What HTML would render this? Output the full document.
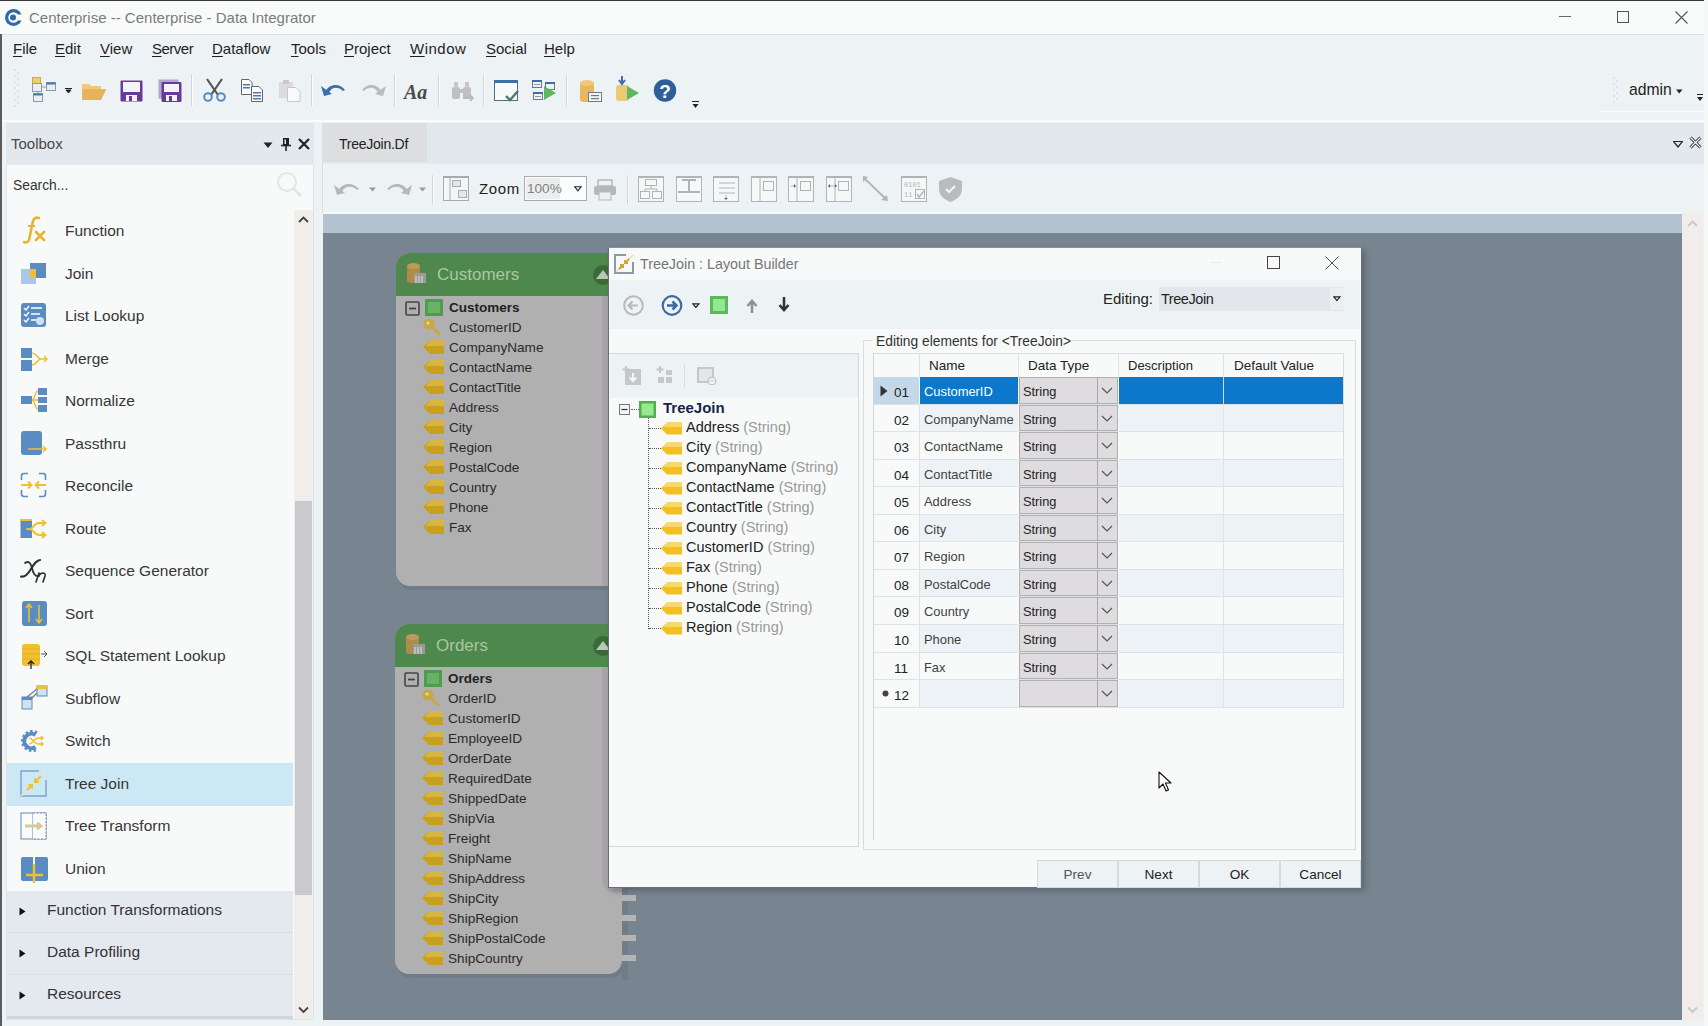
<!DOCTYPE html>
<html><head><meta charset="utf-8"><style>
html,body{margin:0;padding:0;width:1708px;height:1026px;overflow:hidden;background:#edf3f5;}
body{position:relative;font-family:"Liberation Sans", sans-serif;}
.a{position:absolute;}
.t{position:absolute;white-space:nowrap;font-family:"Liberation Sans", sans-serif;}
u{text-decoration:underline;text-underline-offset:2px;text-decoration-thickness:1px;}
</style></head><body>
<div class="a" style="left:0px;top:0px;width:1708px;height:34px;background:#f9fbfb;"></div>
<div class="a" style="left:0px;top:0px;width:1704px;height:1px;background:#3a3a3a;"></div>
<div class="a" style="left:1704px;top:0px;width:4px;height:1026px;background:#f6f8f8;"></div>
<div class="a" style="left:0px;top:34px;width:1704px;height:1px;background:#d9dfe2;"></div>
<div class="a" style="left:0px;top:34px;width:2px;height:992px;background:#5c5c5c;"></div>
<svg class="a" style="left:4px;top:8px;" width="19" height="19" viewBox="0 0 19 19"><circle cx="9.5" cy="9.5" r="8.5" fill="#2f6aa6"/><circle cx="9.5" cy="9.5" r="5.2" fill="#f9fbfb"/><rect x="12" y="6.5" width="8" height="6" fill="#f9fbfb"/><circle cx="9" cy="9.5" r="3" fill="#2f6aa6"/></svg>
<div class="t" style="left:29px;top:10.30px;font-size:15px;line-height:15px;color:#7b7b7b;font-weight:normal;">Centerprise -- Centerprise - Data Integrator</div>
<div class="a" style="left:1559px;top:16px;width:12px;height:1px;background:#666;"></div>
<div class="a" style="left:1617px;top:11px;width:12px;height:12px;border:1px solid #555;box-sizing:border-box;"></div>
<svg class="a" style="left:1675px;top:11px;" width="13" height="13" viewBox="0 0 13 13"><path d="M0.5 0.5 L12.5 12.5 M12.5 0.5 L0.5 12.5" stroke="#555" stroke-width="1.1"/></svg>
<div class="t" style="left:13px;top:41.30px;font-size:15px;line-height:15px;color:#1e1e1e;font-weight:normal;letter-spacing:0px;"><u>F</u>ile</div>
<div class="t" style="left:55px;top:41.30px;font-size:15px;line-height:15px;color:#1e1e1e;font-weight:normal;letter-spacing:0px;"><u>E</u>dit</div>
<div class="t" style="left:100px;top:41.30px;font-size:15px;line-height:15px;color:#1e1e1e;font-weight:normal;letter-spacing:0px;"><u>V</u>iew</div>
<div class="t" style="left:152px;top:41.30px;font-size:15px;line-height:15px;color:#1e1e1e;font-weight:normal;letter-spacing:-0.5px;"><u>S</u>erver</div>
<div class="t" style="left:212px;top:41.30px;font-size:15px;line-height:15px;color:#1e1e1e;font-weight:normal;letter-spacing:0px;"><u>D</u>ataflow</div>
<div class="t" style="left:291px;top:41.30px;font-size:15px;line-height:15px;color:#1e1e1e;font-weight:normal;letter-spacing:0px;"><u>T</u>ools</div>
<div class="t" style="left:344px;top:41.30px;font-size:15px;line-height:15px;color:#1e1e1e;font-weight:normal;letter-spacing:0px;"><u>P</u>roject</div>
<div class="t" style="left:410px;top:41.30px;font-size:15px;line-height:15px;color:#1e1e1e;font-weight:normal;letter-spacing:0.5px;"><u>W</u>indow</div>
<div class="t" style="left:486px;top:41.30px;font-size:15px;line-height:15px;color:#1e1e1e;font-weight:normal;letter-spacing:0px;"><u>S</u>ocial</div>
<div class="t" style="left:544px;top:41.30px;font-size:15px;line-height:15px;color:#1e1e1e;font-weight:normal;letter-spacing:0px;"><u>H</u>elp</div>
<svg class="a" style="left:13px;top:68px;" width="9" height="40" viewBox="0 0 9 40"><rect x="1" y="1" width="2" height="2" fill="#dde3e6"/><rect x="4" y="4" width="2" height="2" fill="#dde3e6"/><rect x="1" y="7" width="2" height="2" fill="#dde3e6"/><rect x="4" y="10" width="2" height="2" fill="#dde3e6"/><rect x="1" y="13" width="2" height="2" fill="#dde3e6"/><rect x="4" y="16" width="2" height="2" fill="#dde3e6"/><rect x="1" y="19" width="2" height="2" fill="#dde3e6"/><rect x="4" y="22" width="2" height="2" fill="#dde3e6"/><rect x="1" y="25" width="2" height="2" fill="#dde3e6"/><rect x="4" y="28" width="2" height="2" fill="#dde3e6"/><rect x="1" y="31" width="2" height="2" fill="#dde3e6"/><rect x="4" y="34" width="2" height="2" fill="#dde3e6"/><rect x="1" y="37" width="2" height="2" fill="#dde3e6"/></svg>
<svg class="a" style="left:32px;top:77px;" width="24" height="25" viewBox="0 0 24 25"><rect x="0.5" y="0.5" width="8" height="6" fill="#f0d060" stroke="#c8b040"/><rect x="0.5" y="6.5" width="9" height="8" fill="#e8eef2" stroke="#8a9aa8"/><rect x="14.5" y="5.5" width="9" height="8" fill="#e8eef2" stroke="#8a9aa8"/><rect x="14.5" y="5.5" width="9" height="2" fill="#4a78a8"/><rect x="1.5" y="16.5" width="9" height="8" fill="#e8eef2" stroke="#8a9aa8"/><rect x="1.5" y="16.5" width="9" height="2" fill="#4a78a8"/><path d="M9 10 L14 10 M6 14 L6 16" stroke="#8a9aa8"/></svg>
<svg class="a" style="left:65px;top:88px;" width="8" height="6" viewBox="0 0 8 6"><path d="M0 0.5 H7 M1 2 L6 2 L3.5 5 Z" stroke="#222" stroke-width="1" fill="#222"/></svg>
<svg class="a" style="left:81px;top:81px;" width="26" height="20" viewBox="0 0 26 20"><path d="M1 4 L1 18 L20 18 L25 8 L8 8 L6 4 Z" fill="#e8b860"/><path d="M1 3 L8 3 L10 5 L20 5 L20 8 L1 8 Z" fill="#f0c878"/><path d="M4 9 L25 9 L20 19 L1 19 Z" fill="#e6b35a"/></svg>
<svg class="a" style="left:120px;top:80px;" width="23" height="22" viewBox="0 0 23 22"><rect x="0.5" y="0.5" width="22" height="21" rx="1" fill="#6a3a9a"/><rect x="3" y="2" width="17" height="10" fill="#f4f4f8"/><rect x="6" y="15" width="11" height="6" fill="#f4f4f8"/><rect x="9" y="16" width="3" height="5" fill="#6a3a9a"/></svg>
<svg class="a" style="left:158px;top:79px;" width="24" height="23" viewBox="0 0 24 23"><rect x="0.5" y="0.5" width="20" height="19" fill="#b0a8c8"/><rect x="3.5" y="3" width="20" height="20" rx="1" fill="#6a3a9a"/><rect x="6" y="5" width="15" height="8" fill="#f4f4f8"/><rect x="8" y="16" width="11" height="6" fill="#f4f4f8"/><rect x="11" y="17" width="3" height="5" fill="#6a3a9a"/></svg>
<div class="a" style="left:191px;top:74px;width:1px;height:32px;background:#cfd6da;"></div>
<div class="a" style="left:192px;top:74px;width:1px;height:32px;background:#fbfdfd;"></div>
<svg class="a" style="left:202px;top:78px;" width="25" height="24" viewBox="0 0 25 24"><path d="M5 1 L16 17 M20 1 L9 17" stroke="#555" stroke-width="2.2"/><circle cx="6" cy="19" r="3.8" fill="none" stroke="#5a8ac0" stroke-width="2"/><circle cx="19" cy="19" r="3.8" fill="none" stroke="#5a8ac0" stroke-width="2"/></svg>
<svg class="a" style="left:241px;top:79px;" width="22" height="23" viewBox="0 0 22 23"><path d="M0.5 0.5 H8 L11 3.5 V15.5 H0.5 Z" fill="#fff" stroke="#666"/><rect x="2" y="5" width="7" height="1.5" fill="#4a78a8"/><rect x="2" y="8" width="7" height="1.5" fill="#4a78a8"/><path d="M10.5 7.5 H18 L21.5 11 V22.5 H10.5 Z" fill="#fff" stroke="#666"/><rect x="12" y="13" width="8" height="1.5" fill="#4a78a8"/><rect x="12" y="16" width="8" height="1.5" fill="#4a78a8"/><rect x="12" y="19" width="8" height="1.5" fill="#4a78a8"/></svg>
<svg class="a" style="left:278px;top:79px;" width="23" height="23" viewBox="0 0 23 23"><rect x="1" y="3" width="14" height="16" fill="#dcdcdc"/><rect x="5" y="1" width="6" height="4" fill="#c8c8c8"/><path d="M9.5 8.5 H18 L22 12.5 V22.5 H9.5 Z" fill="#fafafa" stroke="#c8c8c8"/></svg>
<div class="a" style="left:311px;top:74px;width:1px;height:32px;background:#cfd6da;"></div>
<div class="a" style="left:312px;top:74px;width:1px;height:32px;background:#fbfdfd;"></div>
<svg class="a" style="left:321px;top:82px;" width="25" height="14" viewBox="0 0 25 14"><path d="M4 10 C8 2 18 0 24 8 L22 9 C17 4 10 5 8 11 Z" fill="#3d6ea8"/><path d="M0 4 L3 14 L11 12 Z" fill="#3d6ea8"/></svg>
<svg class="a" style="left:361px;top:82px;" width="25" height="14" viewBox="0 0 25 14"><path d="M21 10 C17 2 7 0 1 8 L3 9 C8 4 15 5 17 11 Z" fill="#b8bcbf"/><path d="M25 4 L22 14 L14 12 Z" fill="#b8bcbf"/></svg>
<div class="a" style="left:394px;top:74px;width:1px;height:32px;background:#cfd6da;"></div>
<div class="a" style="left:395px;top:74px;width:1px;height:32px;background:#fbfdfd;"></div>
<div class="t" style="left:404px;top:82.07px;font-size:20px;line-height:20px;color:#4a4a4a;font-weight:bold;font-family:'Liberation Serif',serif;font-style:italic;">Aa</div>
<div class="a" style="left:438px;top:74px;width:1px;height:32px;background:#cfd6da;"></div>
<div class="a" style="left:439px;top:74px;width:1px;height:32px;background:#fbfdfd;"></div>
<svg class="a" style="left:451px;top:81px;" width="24" height="22" viewBox="0 0 24 22"><rect x="1" y="6" width="8" height="12" rx="2" fill="#c0c0c0"/><rect x="12" y="6" width="8" height="12" rx="2" fill="#c0c0c0"/><rect x="3" y="1" width="4" height="6" fill="#c8c8c8"/><rect x="14" y="1" width="4" height="6" fill="#c8c8c8"/><rect x="8" y="8" width="5" height="4" fill="#c0c0c0"/><path d="M12 17 H22 M19 14 L22 17 L19 20" stroke="#b8b8b8" stroke-width="1.6" fill="none"/></svg>
<div class="a" style="left:483px;top:74px;width:1px;height:32px;background:#cfd6da;"></div>
<div class="a" style="left:484px;top:74px;width:1px;height:32px;background:#fbfdfd;"></div>
<svg class="a" style="left:494px;top:80px;" width="25" height="22" viewBox="0 0 25 22"><rect x="0.5" y="0.5" width="23" height="20" fill="#f8fafa" stroke="#5a6a78"/><rect x="0" y="0" width="24" height="3" fill="#3d6ea8"/><path d="M12 16 L16 20 L24 11" stroke="#4a7a6a" stroke-width="2.4" fill="none"/></svg>
<svg class="a" style="left:532px;top:80px;" width="25" height="21" viewBox="0 0 25 21"><rect x="0.5" y="0.5" width="9" height="7" fill="#eef2f4" stroke="#6a7a88"/><rect x="0" y="0" width="10" height="2" fill="#3d6ea8"/><path d="M2 4.5 H8" stroke="#8a9aa8"/><rect x="13.5" y="2.5" width="9" height="7" fill="#eef2f4" stroke="#6a7a88"/><rect x="13" y="2" width="10" height="2" fill="#3d6ea8"/><rect x="1.5" y="12.5" width="9" height="7" fill="#eef2f4" stroke="#6a7a88"/><rect x="1" y="12" width="10" height="2" fill="#3d6ea8"/><path d="M3 16.5 H9" stroke="#8a9aa8"/><path d="M12 6 L24 13 L12 20 Z" fill="#5cba5c"/></svg>
<div class="a" style="left:566px;top:74px;width:1px;height:32px;background:#cfd6da;"></div>
<div class="a" style="left:567px;top:74px;width:1px;height:32px;background:#fbfdfd;"></div>
<svg class="a" style="left:579px;top:79px;" width="24" height="24" viewBox="0 0 24 24"><rect x="1" y="3" width="14" height="20" rx="3" fill="#e8b860"/><ellipse cx="8" cy="4" rx="7" ry="3" fill="#f0c878"/><rect x="9.5" y="13.5" width="13" height="9" fill="#f4f6f6" stroke="#6a7a88"/><rect x="12" y="16" width="8" height="1.2" fill="#6a7a88"/><rect x="12" y="19" width="8" height="1.2" fill="#6a7a88"/></svg>
<svg class="a" style="left:615px;top:76px;" width="25" height="26" viewBox="0 0 25 26"><rect x="1" y="9" width="13" height="16" rx="3" fill="#ecc878"/><path d="M7 0 V7 M4 4 L7 8 L10 4" stroke="#3d6ea8" stroke-width="2" fill="none"/><path d="M12 10 L24 17 L12 24 Z" fill="#5cba5c"/></svg>
<svg class="a" style="left:653px;top:79px;" width="24" height="23" viewBox="0 0 24 23"><circle cx="12" cy="11.5" r="11.2" fill="#2f5f98"/><text x="12" y="18.5" text-anchor="middle" font-family="Liberation Sans" font-weight="bold" font-size="19" fill="#fff">?</text></svg>
<svg class="a" style="left:692px;top:101px;" width="8" height="8" viewBox="0 0 8 8"><path d="M0 0.5 H7" stroke="#222"/><path d="M0.5 3 H6.5 L3.5 7 Z" fill="#222"/></svg>
<svg class="a" style="left:1612px;top:76px;" width="8" height="28" viewBox="0 0 8 28"><rect x="1" y="1" width="2" height="2" fill="#dde3e6"/><rect x="4" y="4" width="2" height="2" fill="#dde3e6"/><rect x="1" y="7" width="2" height="2" fill="#dde3e6"/><rect x="4" y="10" width="2" height="2" fill="#dde3e6"/><rect x="1" y="13" width="2" height="2" fill="#dde3e6"/><rect x="4" y="16" width="2" height="2" fill="#dde3e6"/><rect x="1" y="19" width="2" height="2" fill="#dde3e6"/><rect x="4" y="22" width="2" height="2" fill="#dde3e6"/><rect x="1" y="25" width="2" height="2" fill="#dde3e6"/></svg>
<div class="t" style="left:1629px;top:81.71px;font-size:15.7px;line-height:15.7px;color:#1e1e1e;font-weight:normal;">admin</div>
<svg class="a" style="left:1676px;top:89px;" width="7" height="5" viewBox="0 0 7 5"><path d="M0 0.5 H6.5 L3.3 4.5 Z" fill="#222"/></svg>
<svg class="a" style="left:1697px;top:94px;" width="7" height="8" viewBox="0 0 7 8"><path d="M0 0.5 H6" stroke="#222"/><path d="M0 3 H6 L3 7 Z" fill="#222"/></svg>
<div class="a" style="left:1600px;top:111px;width:104px;height:1px;background:#fbfdfd;"></div>
<div class="a" style="left:2px;top:120px;width:1702px;height:2px;background:#fbfdfd;"></div>
<div class="a" style="left:6px;top:123px;width:308px;height:897px;background:#f8fafa;box-sizing:border-box;border:1px solid #dde3e6;"></div>
<div class="a" style="left:6px;top:123px;width:308px;height:42px;background:#e3e8ef;"></div>
<div class="t" style="left:11px;top:136.30px;font-size:15px;line-height:15px;color:#484848;font-weight:normal;">Toolbox</div>
<svg class="a" style="left:263px;top:142px;" width="10" height="7" viewBox="0 0 10 7"><path d="M0.5 0.5 H9.5 L5 6 Z" fill="#222"/></svg>
<svg class="a" style="left:281px;top:138px;" width="10" height="13" viewBox="0 0 10 13"><rect x="2" y="0" width="6" height="7" fill="#222"/><rect x="3.5" y="1.5" width="1.5" height="4.5" fill="#e3e8ef"/><path d="M0 7.5 H10" stroke="#222" stroke-width="1.6"/><path d="M5 8 V13" stroke="#222" stroke-width="1.6"/></svg>
<svg class="a" style="left:298px;top:138px;" width="12" height="12" viewBox="0 0 12 12"><path d="M1 1 L11 11 M11 1 L1 11" stroke="#222" stroke-width="2.2"/></svg>
<div class="t" style="left:13px;top:179.32px;font-size:13.8px;line-height:13.8px;color:#333;font-weight:normal;">Search...</div>
<svg class="a" style="left:276px;top:171px;" width="28" height="28" viewBox="0 0 28 28"><circle cx="11" cy="11" r="9" fill="none" stroke="#e3e5e6" stroke-width="2"/><path d="M17.5 17.5 L25 25" stroke="#e3e5e6" stroke-width="3"/></svg>
<div class="a" style="left:294px;top:210px;width:19px;height:809px;background:#f0edea;"></div>
<div class="a" style="left:295px;top:501px;width:17px;height:394px;background:#c9c9ce;"></div>
<svg class="a" style="left:298px;top:216px;" width="11" height="7" viewBox="0 0 11 7"><path d="M1 6 L5.5 1.5 L10 6" stroke="#444" stroke-width="1.8" fill="none"/></svg>
<svg class="a" style="left:298px;top:1006px;" width="11" height="8" viewBox="0 0 11 8"><path d="M1 1.5 L5.5 6 L10 1.5" stroke="#444" stroke-width="1.8" fill="none"/></svg>
<div class="a" style="left:7px;top:763px;width:286px;height:43px;background:#cde8f5;"></div>
<svg class="a" style="left:20px;top:215px;" width="28" height="30" viewBox="0 0 28 30"><path d="M9 25 C8 27 6 28 4 27 M9 25 L13 6 C14 3 16 2 19 3" stroke="#e8b430" stroke-width="2.6" fill="none" stroke-linecap="round"/><path d="M8 11 H15" stroke="#e8b430" stroke-width="2"/><path d="M16 17 L24 25 M24 17 L16 25" stroke="#e8b430" stroke-width="2.6" stroke-linecap="round"/></svg>
<div class="t" style="left:65px;top:223.38px;font-size:15.5px;line-height:15.5px;color:#363636;font-weight:normal;">Function</div>
<svg class="a" style="left:20px;top:262px;" width="28" height="26" viewBox="0 0 28 26"><rect x="1" y="7" width="15" height="15" fill="#a8c8e8"/><rect x="10" y="1" width="16" height="15" fill="#5a8cc2"/><rect x="10" y="7" width="6" height="9" fill="#f0c030"/></svg>
<div class="t" style="left:65px;top:265.88px;font-size:15.5px;line-height:15.5px;color:#363636;font-weight:normal;">Join</div>
<svg class="a" style="left:20px;top:302px;" width="28" height="28" viewBox="0 0 28 28"><rect x="1" y="1" width="25" height="24" rx="3" fill="#5a8cc2"/><path d="M4 6 L6 8 L9 4 M4 12 L6 14 L9 10 M4 18 L6 20 L9 16" stroke="#fff" stroke-width="1.3" fill="none"/><path d="M11 6 H22 M11 12 H20 M11 18 H17" stroke="#fff" stroke-width="1.3"/><circle cx="20" cy="19" r="4" fill="#cfe2f4"/></svg>
<div class="t" style="left:65px;top:308.38px;font-size:15.5px;line-height:15.5px;color:#363636;font-weight:normal;">List Lookup</div>
<svg class="a" style="left:20px;top:347px;" width="28" height="26" viewBox="0 0 28 26"><rect x="1" y="1" width="11" height="10" fill="#5a8cc2"/><rect x="1" y="13" width="11" height="11" fill="#5a8cc2"/><path d="M12 6 C17 6 17 12 21 12 M12 18 C17 18 17 12 21 12 H27 M24 9 L27 12 L24 15" stroke="#f0c030" stroke-width="1.5" fill="none"/></svg>
<div class="t" style="left:65px;top:350.88px;font-size:15.5px;line-height:15.5px;color:#363636;font-weight:normal;">Merge</div>
<svg class="a" style="left:20px;top:387px;" width="28" height="28" viewBox="0 0 28 28"><rect x="1" y="9" width="11" height="8" fill="#5a8cc2"/><rect x="18" y="1" width="9" height="7" fill="#5a8cc2"/><rect x="18" y="10" width="9" height="6" fill="#5a8cc2"/><rect x="18" y="18" width="9" height="7" fill="#5a8cc2"/><path d="M12 13 C15 13 15 4 18 4 M12 13 H18 M12 13 C15 13 15 22 18 22" stroke="#f0c030" stroke-width="1.5" fill="none"/></svg>
<div class="t" style="left:65px;top:393.38px;font-size:15.5px;line-height:15.5px;color:#363636;font-weight:normal;">Normalize</div>
<svg class="a" style="left:20px;top:430px;" width="28" height="28" viewBox="0 0 28 28"><rect x="1" y="1" width="21" height="24" rx="3" fill="#5a8cc2"/><path d="M8 19 H26 M23 16 L26 19 L23 22" stroke="#f0c030" stroke-width="1.5" fill="none"/></svg>
<div class="t" style="left:65px;top:435.88px;font-size:15.5px;line-height:15.5px;color:#363636;font-weight:normal;">Passthru</div>
<svg class="a" style="left:20px;top:472px;" width="28" height="27" viewBox="0 0 28 27"><path d="M8 1.5 H4 Q1.5 1.5 1.5 4 V8 M1.5 18 V22 Q1.5 24.5 4 24.5 H8 M19 1.5 H23 Q25.5 1.5 25.5 4 V8 M25.5 18 V22 Q25.5 24.5 23 24.5 H19" stroke="#5a8cc2" stroke-width="1.6" fill="none"/><path d="M1 13 H11 M8 9.5 L11.5 13 L8 16.5 M26 13 H16 M19 9.5 L15.5 13 L19 16.5" stroke="#f0c030" stroke-width="2" fill="none"/></svg>
<div class="t" style="left:65px;top:478.38px;font-size:15.5px;line-height:15.5px;color:#363636;font-weight:normal;">Reconcile</div>
<svg class="a" style="left:20px;top:515px;" width="28" height="28" viewBox="0 0 28 28"><rect x="0.5" y="4.5" width="11.5" height="18.5" fill="#5a8cc2"/><rect x="0.5" y="4" width="11.5" height="2" fill="#f0c030"/><path d="M7 14 H10 C13 14 14 8 19 8 H25 M10 14 C13 14 14 20 19 20 H25 M22.5 5.5 L25.5 8 L22.5 10.5 M22.5 17.5 L25.5 20 L22.5 22.5" stroke="#f0c030" stroke-width="2" fill="none" stroke-linecap="round"/></svg>
<div class="t" style="left:65px;top:520.88px;font-size:15.5px;line-height:15.5px;color:#363636;font-weight:normal;">Route</div>
<svg class="a" style="left:20px;top:556px;" width="30" height="28" viewBox="0 0 30 28"><path d="M1 20.5 C5 21.5 8 18 11 13 C14 8 16 4.5 20 4" stroke="#333" stroke-width="2.2" fill="none" stroke-linecap="round"/><path d="M5 7 C9 4 11 8 12 12 C13 17 15 21 19 20" stroke="#333" stroke-width="1.8" fill="none" stroke-linecap="round"/><path d="M16 26 L19 17 M18.5 20 C21 16 26 16 25 20 L23 26" stroke="#333" stroke-width="1.7" fill="none" stroke-linecap="round"/></svg>
<div class="t" style="left:65px;top:563.38px;font-size:15.5px;line-height:15.5px;color:#363636;font-weight:normal;">Sequence Generator</div>
<svg class="a" style="left:21px;top:600px;" width="28" height="27" viewBox="0 0 28 27"><rect x="1" y="1" width="25" height="25" rx="3" fill="#5a8cc2"/><path d="M8 22 V5 M5 8 L8 4 L11 8 M18 5 V22 M15 19 L18 23 L21 19" stroke="#f0c030" stroke-width="1.5" fill="none"/></svg>
<div class="t" style="left:65px;top:605.88px;font-size:15.5px;line-height:15.5px;color:#363636;font-weight:normal;">Sort</div>
<svg class="a" style="left:21px;top:642px;" width="28" height="28" viewBox="0 0 28 28"><rect x="1" y="2" width="18" height="22" rx="3" fill="#f0c030"/><path d="M1 7 H19 M1 12 H19 M1 17 H19" stroke="#e0b020"/><path d="M20 12 H26 M23 9 L26 12 L23 15" stroke="#555" stroke-width="1" fill="none"/><path d="M10 27 V19 M7 22 L10 19 L13 22" stroke="#222" stroke-width="1.3" fill="none"/></svg>
<div class="t" style="left:65px;top:648.38px;font-size:15.5px;line-height:15.5px;color:#363636;font-weight:normal;">SQL Statement Lookup</div>
<svg class="a" style="left:21px;top:685px;" width="28" height="27" viewBox="0 0 28 27"><rect x="1" y="12" width="10" height="12" fill="#cfe2f4" stroke="#5a8cc2"/><rect x="1" y="12" width="10" height="3" fill="#5a8cc2"/><rect x="16" y="1" width="10" height="10" fill="#cfe2f4" stroke="#5a8cc2"/><rect x="16" y="1" width="10" height="3" fill="#f0c030"/><path d="M6 12 L16 4 M9 15 L16 8" stroke="#778" stroke-width="1.2"/></svg>
<div class="t" style="left:65px;top:690.88px;font-size:15.5px;line-height:15.5px;color:#363636;font-weight:normal;">Subflow</div>
<svg class="a" style="left:20px;top:729px;" width="28" height="25" viewBox="0 0 28 25"><path d="M15.5 6 A7.2 7.2 0 1 0 15.5 18" fill="none" stroke="#5a8cc2" stroke-width="4"/><path d="M17 3.5 A9.8 9.8 0 1 0 17 20.5" fill="none" stroke="#5a8cc2" stroke-width="2.6" stroke-dasharray="2.4 2.2"/><path d="M9 9 C13 9 14 15 18 15 H23 M9 15 C13 15 14 9 18 9 H23 M21 7 L23 9 L21 11 M21 13 L23 15 L21 17" stroke="#f0c030" stroke-width="1.5" fill="none"/></svg>
<div class="t" style="left:65px;top:733.38px;font-size:15.5px;line-height:15.5px;color:#363636;font-weight:normal;">Switch</div>
<svg class="a" style="left:20px;top:770px;" width="28" height="28" viewBox="0 0 28 28"><path d="M19 1 H1 V26 H26 V10" stroke="#7aa2d0" stroke-width="1.4" fill="none"/><path d="M1 26 L27 0" stroke="#f0e4c8" stroke-width="1.6" stroke-dasharray="2 1"/><path d="M7 20 L12 15 M8.5 15 H12 V18.5 M21 6 L15 12 M15 8.5 V12 H18.5" stroke="#f0c030" stroke-width="2" fill="none"/></svg>
<div class="t" style="left:65px;top:775.88px;font-size:15.5px;line-height:15.5px;color:#363636;font-weight:normal;">Tree Join</div>
<svg class="a" style="left:20px;top:812px;" width="28" height="28" viewBox="0 0 28 28"><rect x="1" y="1" width="25" height="26" fill="#fafcfc" stroke="#5a8cc2" stroke-width="1"/><path d="M13 1 V27" stroke="#5a8cc2"/><path d="M13 1 H26 V27 H13" stroke="#888" stroke-dasharray="2 1.5" fill="#fafcfc"/><path d="M5 14 H20 M17 11 L21 14 L17 17" stroke="#d8c8a0" stroke-width="3" fill="none"/></svg>
<div class="t" style="left:65px;top:818.38px;font-size:15.5px;line-height:15.5px;color:#363636;font-weight:normal;">Tree Transform</div>
<svg class="a" style="left:20px;top:856px;" width="29" height="27" viewBox="0 0 29 27"><rect x="1" y="1" width="27" height="24" rx="2" fill="#5a8cc2"/><rect x="13" y="1" width="2" height="10" fill="#f8fafa"/><path d="M14 8 V27 M6 19 H23" stroke="#f0c030" stroke-width="2.4"/></svg>
<div class="t" style="left:65px;top:860.88px;font-size:15.5px;line-height:15.5px;color:#363636;font-weight:normal;">Union</div>
<div class="a" style="left:7px;top:891px;width:286px;height:42px;background:#e4e9ef;"></div>
<div class="a" style="left:7px;top:932px;width:286px;height:1px;background:#d7dde3;"></div>
<svg class="a" style="left:19px;top:907px;" width="8" height="9" viewBox="0 0 8 9"><path d="M0.5 0.5 L6.5 4.5 L0.5 8.5 Z" fill="#111"/></svg>
<div class="t" style="left:47px;top:902.38px;font-size:15.5px;line-height:15.5px;color:#333;font-weight:normal;">Function Transformations</div>
<div class="a" style="left:7px;top:933px;width:286px;height:42px;background:#e4e9ef;"></div>
<div class="a" style="left:7px;top:974px;width:286px;height:1px;background:#d7dde3;"></div>
<svg class="a" style="left:19px;top:949px;" width="8" height="9" viewBox="0 0 8 9"><path d="M0.5 0.5 L6.5 4.5 L0.5 8.5 Z" fill="#111"/></svg>
<div class="t" style="left:47px;top:944.38px;font-size:15.5px;line-height:15.5px;color:#333;font-weight:normal;">Data Profiling</div>
<div class="a" style="left:7px;top:975px;width:286px;height:42px;background:#e4e9ef;"></div>
<div class="a" style="left:7px;top:1016px;width:286px;height:1px;background:#d7dde3;"></div>
<svg class="a" style="left:19px;top:991px;" width="8" height="9" viewBox="0 0 8 9"><path d="M0.5 0.5 L6.5 4.5 L0.5 8.5 Z" fill="#111"/></svg>
<div class="t" style="left:47px;top:986.38px;font-size:15.5px;line-height:15.5px;color:#333;font-weight:normal;">Resources</div>
<div class="a" style="left:7px;top:1016px;width:286px;height:3px;background:#d0d6dc;"></div>
<div class="a" style="left:322px;top:123px;width:1382px;height:41px;background:#e3e8ee;"></div>
<div class="a" style="left:322px;top:123px;width:105px;height:39px;background:#dcdee0;"></div>
<div class="t" style="left:339px;top:137.15px;font-size:14px;line-height:14px;color:#222;font-weight:normal;letter-spacing:-0.25px;">TreeJoin.Df</div>
<svg class="a" style="left:1673px;top:141px;" width="10" height="7" viewBox="0 0 10 7"><path d="M0.5 0.5 H9.5 L5 6 Z" fill="none" stroke="#222" stroke-width="1.2"/></svg>
<svg class="a" style="left:1689px;top:136px;" width="13" height="13" viewBox="0 0 13 13"><path d="M1.5 1.5 L11.5 11.5 M11.5 1.5 L1.5 11.5" stroke="#222" stroke-width="3"/><path d="M1.5 1.5 L11.5 11.5 M11.5 1.5 L1.5 11.5" stroke="#fff" stroke-width="1.2"/></svg>
<div class="a" style="left:322px;top:164px;width:1382px;height:49px;background:#edf3f5;"></div>
<div class="a" style="left:322px;top:164px;width:1px;height:49px;background:#d8dee2;"></div>
<svg class="a" style="left:334px;top:180px;" width="26" height="15" viewBox="0 0 26 15"><path d="M4 11 C8 3 18 1 25 9 L23 10 C18 5 10 6 8 12 Z" fill="#b4b8bb"/><path d="M0 5 L3 15 L11 13 Z" fill="#b4b8bb"/></svg>
<svg class="a" style="left:369px;top:187px;" width="8" height="5" viewBox="0 0 8 5"><path d="M0 0.5 H7 L3.5 4.5 Z" fill="#999"/></svg>
<svg class="a" style="left:386px;top:180px;" width="26" height="15" viewBox="0 0 26 15"><path d="M22 11 C18 3 8 1 1 9 L3 10 C8 5 16 6 18 12 Z" fill="#b4b8bb"/><path d="M26 5 L23 15 L15 13 Z" fill="#b4b8bb"/></svg>
<svg class="a" style="left:419px;top:187px;" width="8" height="5" viewBox="0 0 8 5"><path d="M0 0.5 H7 L3.5 4.5 Z" fill="#999"/></svg>
<div class="a" style="left:432px;top:175px;width:1px;height:29px;background:#cfd6da;"></div>
<div class="a" style="left:433px;top:175px;width:1px;height:29px;background:#fbfdfd;"></div>
<svg class="a" style="left:443px;top:176px;" width="26" height="25" viewBox="0 0 26 25"><rect x="0.5" y="0.5" width="25" height="24" fill="#f4f6f6" stroke="#a8acae"/><rect x="0" y="0" width="26" height="2" fill="#a8acae"/><path d="M7 1 V25" stroke="#a8acae"/><rect x="9.5" y="4.5" width="8" height="6" fill="#e4e6e8" stroke="#a8acae"/><rect x="15.5" y="14.5" width="8" height="7" fill="#e4e6e8" stroke="#a8acae"/></svg>
<div class="t" style="left:479px;top:181.30px;font-size:15px;line-height:15px;color:#222;font-weight:normal;letter-spacing:0.6px;">Zoom</div>
<div class="a" style="left:524px;top:176px;width:63px;height:25px;background:#fbfcfc;box-sizing:border-box;border:1px solid #a8acae;"></div>
<div class="a" style="left:526px;top:178px;width:34px;height:21px;background:#eceeee;"></div>
<div class="t" style="left:527px;top:181.99px;font-size:13.6px;line-height:13.6px;color:#808080;font-weight:normal;">100%</div>
<svg class="a" style="left:574px;top:186px;" width="8" height="6" viewBox="0 0 8 6"><path d="M0.8 0.8 H7 L3.9 4.8 Z" fill="none" stroke="#222" stroke-width="1.1"/></svg>
<svg class="a" style="left:594px;top:179px;" width="23" height="22" viewBox="0 0 23 22"><rect x="4" y="1" width="14" height="6" fill="none" stroke="#b4b8bb" stroke-width="1.5"/><rect x="0" y="7" width="22" height="9" rx="2" fill="#b4b8bb"/><rect x="5" y="13" width="12" height="8" fill="#eef0f0" stroke="#b4b8bb"/></svg>
<div class="a" style="left:627px;top:175px;width:1px;height:29px;background:#cfd6da;"></div>
<div class="a" style="left:628px;top:175px;width:1px;height:29px;background:#fbfdfd;"></div>
<svg class="a" style="left:638px;top:176px;" width="26" height="26" viewBox="0 0 26 26"><rect x="0.5" y="0.5" width="25" height="25" fill="#f6f8f8" stroke="#b0b4b6"/><rect x="0" y="0" width="26" height="2" fill="#b0b4b6"/><rect x="7.5" y="3.5" width="11" height="6" fill="none" stroke="#b0b4b6"/><rect x="2.5" y="15.5" width="9" height="7" fill="none" stroke="#b0b4b6"/><rect x="14.5" y="15.5" width="9" height="7" fill="none" stroke="#b0b4b6"/><path d="M13 10 V13 M7 13 H19 M7 13 V15 M19 13 V15" stroke="#b0b4b6"/></svg>
<svg class="a" style="left:676px;top:176px;" width="26" height="26" viewBox="0 0 26 26"><rect x="0.5" y="0.5" width="25" height="25" fill="#f6f8f8" stroke="#b0b4b6"/><rect x="0" y="0" width="26" height="2" fill="#b0b4b6"/><path d="M6 4 H20 M13 4 V15 M2 16 H24" stroke="#b0b4b6" stroke-width="2"/></svg>
<svg class="a" style="left:713px;top:176px;" width="26" height="26" viewBox="0 0 26 26"><rect x="0.5" y="0.5" width="25" height="25" fill="#f6f8f8" stroke="#b0b4b6"/><rect x="0" y="0" width="26" height="2" fill="#b0b4b6"/><path d="M6 7 H22 M6 12 H22 M6 17 H22" stroke="#b0b4b6"/><path d="M13 19 V24 M11 22 L13 24 L15 22" stroke="#b0b4b6"/></svg>
<svg class="a" style="left:751px;top:176px;" width="26" height="26" viewBox="0 0 26 26"><rect x="0.5" y="0.5" width="25" height="25" fill="#f6f8f8" stroke="#b0b4b6"/><rect x="0" y="0" width="26" height="2" fill="#b0b4b6"/><path d="M9 1 V26" stroke="#b0b4b6"/><rect x="12.5" y="5.5" width="10" height="9" fill="none" stroke="#b0b4b6"/></svg>
<svg class="a" style="left:788px;top:176px;" width="26" height="26" viewBox="0 0 26 26"><rect x="0.5" y="0.5" width="25" height="25" fill="#f6f8f8" stroke="#b0b4b6"/><rect x="0" y="0" width="26" height="2" fill="#b0b4b6"/><path d="M9 1 V26" stroke="#b0b4b6"/><rect x="12.5" y="5.5" width="10" height="9" fill="none" stroke="#b0b4b6"/><path d="M3 10 H8 M6 8 L8 10 L6 12" stroke="#b0b4b6"/></svg>
<svg class="a" style="left:826px;top:176px;" width="26" height="26" viewBox="0 0 26 26"><rect x="0.5" y="0.5" width="25" height="25" fill="#f6f8f8" stroke="#b0b4b6"/><rect x="0" y="0" width="26" height="2" fill="#b0b4b6"/><path d="M9 1 V26" stroke="#b0b4b6"/><rect x="12.5" y="5.5" width="10" height="9" fill="none" stroke="#b0b4b6"/><path d="M2 10 H11 M4 8 L2 10 L4 12 M9 8 L11 10 L9 12" stroke="#b0b4b6"/></svg>
<svg class="a" style="left:862px;top:176px;" width="27" height="26" viewBox="0 0 27 26"><path d="M2 2 L24 23" stroke="#b0b4b6" stroke-width="1.8"/><path d="M1 0 L1 6 L6 1 Z M26 25 L19 24 L25 19 Z" fill="#b0b4b6"/></svg>
<svg class="a" style="left:901px;top:176px;" width="26" height="26" viewBox="0 0 26 26"><rect x="0.5" y="0.5" width="25" height="25" fill="#f6f8f8" stroke="#b0b4b6"/><rect x="0" y="0" width="26" height="2" fill="#b0b4b6"/><text x="3" y="11" font-size="7" font-family="Liberation Mono" fill="#b0b4b6">0101</text><text x="3" y="21" font-size="7" font-family="Liberation Mono" fill="#b0b4b6">11</text><rect x="14.5" y="13.5" width="9" height="9" fill="none" stroke="#b0b4b6"/><path d="M16 18 L18 21 L23 15" stroke="#b0b4b6" stroke-width="1.4" fill="none"/></svg>
<svg class="a" style="left:939px;top:177px;" width="23" height="25" viewBox="0 0 23 25"><path d="M11.5 0 L23 4 V12 C23 19 17 23 11.5 25 C6 23 0 19 0 12 V4 Z" fill="#b8bcbe"/><path d="M7 12 L10 15 L16 9" stroke="#f4f6f6" stroke-width="2" fill="none"/></svg>
<div class="a" style="left:323px;top:212px;width:1359px;height:2px;background:#f6f9fa;"></div>
<div class="a" style="left:323px;top:214px;width:1359px;height:19px;background:#b3c3d1;"></div>
<div class="a" style="left:323px;top:233px;width:1359px;height:787px;background:#78848f;"></div>
<div class="a" style="left:1682px;top:213px;width:21px;height:807px;background:#f0edea;"></div>
<svg class="a" style="left:1687px;top:220px;" width="11" height="7" viewBox="0 0 11 7"><path d="M1 6 L5.5 1.5 L10 6" stroke="#c8c8c8" stroke-width="1.8" fill="none"/></svg>
<svg class="a" style="left:1687px;top:1006px;" width="11" height="8" viewBox="0 0 11 8"><path d="M1 1.5 L5.5 6 L10 1.5" stroke="#c8c8c8" stroke-width="1.8" fill="none"/></svg>
<div class="a" style="left:398px;top:576px;width:226px;height:14px;background:#6f7b86;border-radius:0 0 14px 14px;"></div>
<div class="a" style="left:396px;top:253px;width:226px;height:333px;background:#b0b0b0;border-radius:14px 14px 14px 14px;overflow:hidden;"></div>
<div class="a" style="left:396px;top:253px;width:226px;height:43px;background:#4f884c;border-radius:14px 0 0 0;"></div>
<div class="a" style="left:602px;top:296px;width:20px;height:290px;background:#a9a3a9;border-radius:0 0 0 0px;"></div>
<svg class="a" style="left:407px;top:263px;" width="20" height="22" viewBox="0 0 20 22"><rect x="0" y="2" width="13" height="18" rx="3" fill="#b08a48"/><ellipse cx="6.5" cy="3" rx="6.5" ry="3" fill="#c09a58"/><rect x="7" y="10" width="12" height="10" fill="#9a9a9a"/><path d="M9 13 V20 M12 13 V20 M15 13 V20" stroke="#c8c8c8" stroke-width="1.5"/></svg>
<div class="t" style="left:437px;top:265.61px;font-size:17px;line-height:17px;color:#a9c7a2;font-weight:normal;">Customers</div>
<svg class="a" style="left:592px;top:264px;" width="24" height="22" viewBox="0 0 24 22"><circle cx="11" cy="11" r="10" fill="#3a6a38"/><path d="M4 15 L11 6 L18 15 Z" fill="#b8c8b8"/></svg>
<svg class="a" style="left:405px;top:301px;" width="15" height="15" viewBox="0 0 15 15"><rect x="1" y="1" width="13" height="13" fill="none" stroke="#444" stroke-width="1.6" rx="1"/><path d="M4 7.5 H11" stroke="#444" stroke-width="1.8"/></svg>
<svg class="a" style="left:425px;top:299px;" width="18" height="17" viewBox="0 0 18 17"><rect x="0" y="0" width="18" height="17" fill="#4e9c4e"/><rect x="3" y="3" width="12" height="11" fill="#68b268"/></svg>
<div class="t" style="left:449px;top:300.57px;font-size:13.5px;line-height:13.5px;color:#222;font-weight:bold;">Customers</div>
<svg class="a" style="left:423px;top:318px;" width="19" height="19" viewBox="0 0 19 19"><circle cx="6" cy="6" r="5.5" fill="#c8a840"/><circle cx="5" cy="5" r="1.5" fill="#e8d8a0"/><path d="M9 9 L17 17 M13 15 L15 13" stroke="#c8a840" stroke-width="2.5"/></svg>
<div class="t" style="left:449px;top:321.49px;font-size:13.6px;line-height:13.6px;color:#2a2a2a;font-weight:normal;">CustomerID</div>
<svg class="a" style="left:423px;top:339px;" width="21" height="16" viewBox="0 0 21 16"><path d="M0 8 L7 1 H21 V15 H7 Z" fill="#c8a020"/><path d="M7 1 H21 V7 H3 Z" fill="#d8b440"/></svg>
<div class="t" style="left:449px;top:341.49px;font-size:13.6px;line-height:13.6px;color:#2a2a2a;font-weight:normal;">CompanyName</div>
<svg class="a" style="left:423px;top:359px;" width="21" height="16" viewBox="0 0 21 16"><path d="M0 8 L7 1 H21 V15 H7 Z" fill="#c8a020"/><path d="M7 1 H21 V7 H3 Z" fill="#d8b440"/></svg>
<div class="t" style="left:449px;top:361.49px;font-size:13.6px;line-height:13.6px;color:#2a2a2a;font-weight:normal;">ContactName</div>
<svg class="a" style="left:423px;top:379px;" width="21" height="16" viewBox="0 0 21 16"><path d="M0 8 L7 1 H21 V15 H7 Z" fill="#c8a020"/><path d="M7 1 H21 V7 H3 Z" fill="#d8b440"/></svg>
<div class="t" style="left:449px;top:381.49px;font-size:13.6px;line-height:13.6px;color:#2a2a2a;font-weight:normal;">ContactTitle</div>
<svg class="a" style="left:423px;top:399px;" width="21" height="16" viewBox="0 0 21 16"><path d="M0 8 L7 1 H21 V15 H7 Z" fill="#c8a020"/><path d="M7 1 H21 V7 H3 Z" fill="#d8b440"/></svg>
<div class="t" style="left:449px;top:401.49px;font-size:13.6px;line-height:13.6px;color:#2a2a2a;font-weight:normal;">Address</div>
<svg class="a" style="left:423px;top:419px;" width="21" height="16" viewBox="0 0 21 16"><path d="M0 8 L7 1 H21 V15 H7 Z" fill="#c8a020"/><path d="M7 1 H21 V7 H3 Z" fill="#d8b440"/></svg>
<div class="t" style="left:449px;top:421.49px;font-size:13.6px;line-height:13.6px;color:#2a2a2a;font-weight:normal;">City</div>
<svg class="a" style="left:423px;top:439px;" width="21" height="16" viewBox="0 0 21 16"><path d="M0 8 L7 1 H21 V15 H7 Z" fill="#c8a020"/><path d="M7 1 H21 V7 H3 Z" fill="#d8b440"/></svg>
<div class="t" style="left:449px;top:441.49px;font-size:13.6px;line-height:13.6px;color:#2a2a2a;font-weight:normal;">Region</div>
<svg class="a" style="left:423px;top:459px;" width="21" height="16" viewBox="0 0 21 16"><path d="M0 8 L7 1 H21 V15 H7 Z" fill="#c8a020"/><path d="M7 1 H21 V7 H3 Z" fill="#d8b440"/></svg>
<div class="t" style="left:449px;top:461.49px;font-size:13.6px;line-height:13.6px;color:#2a2a2a;font-weight:normal;">PostalCode</div>
<svg class="a" style="left:423px;top:479px;" width="21" height="16" viewBox="0 0 21 16"><path d="M0 8 L7 1 H21 V15 H7 Z" fill="#c8a020"/><path d="M7 1 H21 V7 H3 Z" fill="#d8b440"/></svg>
<div class="t" style="left:449px;top:481.49px;font-size:13.6px;line-height:13.6px;color:#2a2a2a;font-weight:normal;">Country</div>
<svg class="a" style="left:423px;top:499px;" width="21" height="16" viewBox="0 0 21 16"><path d="M0 8 L7 1 H21 V15 H7 Z" fill="#c8a020"/><path d="M7 1 H21 V7 H3 Z" fill="#d8b440"/></svg>
<div class="t" style="left:449px;top:501.49px;font-size:13.6px;line-height:13.6px;color:#2a2a2a;font-weight:normal;">Phone</div>
<svg class="a" style="left:423px;top:519px;" width="21" height="16" viewBox="0 0 21 16"><path d="M0 8 L7 1 H21 V15 H7 Z" fill="#c8a020"/><path d="M7 1 H21 V7 H3 Z" fill="#d8b440"/></svg>
<div class="t" style="left:449px;top:521.49px;font-size:13.6px;line-height:13.6px;color:#2a2a2a;font-weight:normal;">Fax</div>
<div class="a" style="left:397px;top:964px;width:227px;height:14px;background:#6f7b86;border-radius:0 0 14px 14px;"></div>
<div class="a" style="left:395px;top:624px;width:227px;height:350px;background:#b0b0b0;border-radius:14px 14px 14px 14px;overflow:hidden;"></div>
<div class="a" style="left:395px;top:624px;width:227px;height:43px;background:#4f884c;border-radius:14px 0 0 0;"></div>
<div class="a" style="left:602px;top:667px;width:20px;height:226px;background:#a9a3a9;border-radius:0 0 0 14px;"></div>
<svg class="a" style="left:406px;top:634px;" width="20" height="22" viewBox="0 0 20 22"><rect x="0" y="2" width="13" height="18" rx="3" fill="#b08a48"/><ellipse cx="6.5" cy="3" rx="6.5" ry="3" fill="#c09a58"/><rect x="7" y="10" width="12" height="10" fill="#9a9a9a"/><path d="M9 13 V20 M12 13 V20 M15 13 V20" stroke="#c8c8c8" stroke-width="1.5"/></svg>
<div class="t" style="left:436px;top:636.61px;font-size:17px;line-height:17px;color:#a9c7a2;font-weight:normal;">Orders</div>
<svg class="a" style="left:592px;top:635px;" width="24" height="22" viewBox="0 0 24 22"><circle cx="11" cy="11" r="10" fill="#3a6a38"/><path d="M4 15 L11 6 L18 15 Z" fill="#b8c8b8"/></svg>
<svg class="a" style="left:404px;top:672px;" width="15" height="15" viewBox="0 0 15 15"><rect x="1" y="1" width="13" height="13" fill="none" stroke="#444" stroke-width="1.6" rx="1"/><path d="M4 7.5 H11" stroke="#444" stroke-width="1.8"/></svg>
<svg class="a" style="left:424px;top:670px;" width="18" height="17" viewBox="0 0 18 17"><rect x="0" y="0" width="18" height="17" fill="#4e9c4e"/><rect x="3" y="3" width="12" height="11" fill="#68b268"/></svg>
<div class="t" style="left:448px;top:671.57px;font-size:13.5px;line-height:13.5px;color:#222;font-weight:bold;">Orders</div>
<svg class="a" style="left:422px;top:689px;" width="19" height="19" viewBox="0 0 19 19"><circle cx="6" cy="6" r="5.5" fill="#c8a840"/><circle cx="5" cy="5" r="1.5" fill="#e8d8a0"/><path d="M9 9 L17 17 M13 15 L15 13" stroke="#c8a840" stroke-width="2.5"/></svg>
<div class="t" style="left:448px;top:692.49px;font-size:13.6px;line-height:13.6px;color:#2a2a2a;font-weight:normal;">OrderID</div>
<svg class="a" style="left:422px;top:710px;" width="21" height="16" viewBox="0 0 21 16"><path d="M0 8 L7 1 H21 V15 H7 Z" fill="#c8a020"/><path d="M7 1 H21 V7 H3 Z" fill="#d8b440"/></svg>
<div class="t" style="left:448px;top:712.49px;font-size:13.6px;line-height:13.6px;color:#2a2a2a;font-weight:normal;">CustomerID</div>
<svg class="a" style="left:422px;top:730px;" width="21" height="16" viewBox="0 0 21 16"><path d="M0 8 L7 1 H21 V15 H7 Z" fill="#c8a020"/><path d="M7 1 H21 V7 H3 Z" fill="#d8b440"/></svg>
<div class="t" style="left:448px;top:732.49px;font-size:13.6px;line-height:13.6px;color:#2a2a2a;font-weight:normal;">EmployeeID</div>
<svg class="a" style="left:422px;top:750px;" width="21" height="16" viewBox="0 0 21 16"><path d="M0 8 L7 1 H21 V15 H7 Z" fill="#c8a020"/><path d="M7 1 H21 V7 H3 Z" fill="#d8b440"/></svg>
<div class="t" style="left:448px;top:752.49px;font-size:13.6px;line-height:13.6px;color:#2a2a2a;font-weight:normal;">OrderDate</div>
<svg class="a" style="left:422px;top:770px;" width="21" height="16" viewBox="0 0 21 16"><path d="M0 8 L7 1 H21 V15 H7 Z" fill="#c8a020"/><path d="M7 1 H21 V7 H3 Z" fill="#d8b440"/></svg>
<div class="t" style="left:448px;top:772.49px;font-size:13.6px;line-height:13.6px;color:#2a2a2a;font-weight:normal;">RequiredDate</div>
<svg class="a" style="left:422px;top:790px;" width="21" height="16" viewBox="0 0 21 16"><path d="M0 8 L7 1 H21 V15 H7 Z" fill="#c8a020"/><path d="M7 1 H21 V7 H3 Z" fill="#d8b440"/></svg>
<div class="t" style="left:448px;top:792.49px;font-size:13.6px;line-height:13.6px;color:#2a2a2a;font-weight:normal;">ShippedDate</div>
<svg class="a" style="left:422px;top:810px;" width="21" height="16" viewBox="0 0 21 16"><path d="M0 8 L7 1 H21 V15 H7 Z" fill="#c8a020"/><path d="M7 1 H21 V7 H3 Z" fill="#d8b440"/></svg>
<div class="t" style="left:448px;top:812.49px;font-size:13.6px;line-height:13.6px;color:#2a2a2a;font-weight:normal;">ShipVia</div>
<svg class="a" style="left:422px;top:830px;" width="21" height="16" viewBox="0 0 21 16"><path d="M0 8 L7 1 H21 V15 H7 Z" fill="#c8a020"/><path d="M7 1 H21 V7 H3 Z" fill="#d8b440"/></svg>
<div class="t" style="left:448px;top:832.49px;font-size:13.6px;line-height:13.6px;color:#2a2a2a;font-weight:normal;">Freight</div>
<svg class="a" style="left:422px;top:850px;" width="21" height="16" viewBox="0 0 21 16"><path d="M0 8 L7 1 H21 V15 H7 Z" fill="#c8a020"/><path d="M7 1 H21 V7 H3 Z" fill="#d8b440"/></svg>
<div class="t" style="left:448px;top:852.49px;font-size:13.6px;line-height:13.6px;color:#2a2a2a;font-weight:normal;">ShipName</div>
<svg class="a" style="left:422px;top:870px;" width="21" height="16" viewBox="0 0 21 16"><path d="M0 8 L7 1 H21 V15 H7 Z" fill="#c8a020"/><path d="M7 1 H21 V7 H3 Z" fill="#d8b440"/></svg>
<div class="t" style="left:448px;top:872.49px;font-size:13.6px;line-height:13.6px;color:#2a2a2a;font-weight:normal;">ShipAddress</div>
<svg class="a" style="left:422px;top:890px;" width="21" height="16" viewBox="0 0 21 16"><path d="M0 8 L7 1 H21 V15 H7 Z" fill="#c8a020"/><path d="M7 1 H21 V7 H3 Z" fill="#d8b440"/></svg>
<div class="t" style="left:448px;top:892.49px;font-size:13.6px;line-height:13.6px;color:#2a2a2a;font-weight:normal;">ShipCity</div>
<svg class="a" style="left:422px;top:910px;" width="21" height="16" viewBox="0 0 21 16"><path d="M0 8 L7 1 H21 V15 H7 Z" fill="#c8a020"/><path d="M7 1 H21 V7 H3 Z" fill="#d8b440"/></svg>
<div class="t" style="left:448px;top:912.49px;font-size:13.6px;line-height:13.6px;color:#2a2a2a;font-weight:normal;">ShipRegion</div>
<svg class="a" style="left:422px;top:930px;" width="21" height="16" viewBox="0 0 21 16"><path d="M0 8 L7 1 H21 V15 H7 Z" fill="#c8a020"/><path d="M7 1 H21 V7 H3 Z" fill="#d8b440"/></svg>
<div class="t" style="left:448px;top:932.49px;font-size:13.6px;line-height:13.6px;color:#2a2a2a;font-weight:normal;">ShipPostalCode</div>
<svg class="a" style="left:422px;top:950px;" width="21" height="16" viewBox="0 0 21 16"><path d="M0 8 L7 1 H21 V15 H7 Z" fill="#c8a020"/><path d="M7 1 H21 V7 H3 Z" fill="#d8b440"/></svg>
<div class="t" style="left:448px;top:952.49px;font-size:13.6px;line-height:13.6px;color:#2a2a2a;font-weight:normal;">ShipCountry</div>
<div class="a" style="left:622px;top:888px;width:6px;height:92px;background:#707c87;"></div>
<div class="a" style="left:622px;top:895px;width:14px;height:6px;background:#b4b4b4;"></div>
<div class="a" style="left:622px;top:915px;width:14px;height:6px;background:#b4b4b4;"></div>
<div class="a" style="left:622px;top:935px;width:14px;height:6px;background:#b4b4b4;"></div>
<div class="a" style="left:622px;top:955px;width:14px;height:6px;background:#b4b4b4;"></div>
<div class="a" style="left:611px;top:250px;width:754px;height:641px;background:rgba(40,50,60,0.35);filter:blur(3px);"></div>
<div class="a" style="left:608px;top:247px;width:754px;height:641px;background:#f8fafa;box-sizing:border-box;border:1px solid #6a7078;border-top-color:#8a9096;"></div>
<svg class="a" style="left:614px;top:254px;" width="20" height="20" viewBox="0 0 20 20"><path d="M12 1 H1 V19 H19 V8" stroke="#8a9aa8" stroke-width="2" fill="none"/><path d="M2 18 L19 1" stroke="#e8dcc0" stroke-width="1.6"/><path d="M5 15 L9 11 M6 11 H9 V14 M15 5 L11 9 M11 6 V9 H14" stroke="#d0a030" stroke-width="1.8" fill="none"/></svg>
<div class="t" style="left:640px;top:256.90px;font-size:14.3px;line-height:14.3px;color:#767676;font-weight:normal;">TreeJoin : Layout Builder</div>
<div class="a" style="left:1210px;top:262px;width:12px;height:1px;background:#e8eaec;"></div>
<div class="a" style="left:1267px;top:256px;width:13px;height:13px;border:1px solid #444;box-sizing:border-box;"></div>
<svg class="a" style="left:1325px;top:256px;" width="14" height="14" viewBox="0 0 14 14"><path d="M0.5 0.5 L13.5 13.5 M13.5 0.5 L0.5 13.5" stroke="#555" stroke-width="1"/></svg>
<div class="a" style="left:610px;top:280px;width:750px;height:49px;background:#edf3f5;"></div>
<svg class="a" style="left:623px;top:295px;" width="21" height="21" viewBox="0 0 21 21"><circle cx="10.5" cy="10.5" r="9.3" fill="none" stroke="#b8b8b8" stroke-width="2"/><path d="M15 10.5 H6 M9.5 6.5 L5.5 10.5 L9.5 14.5" stroke="#b8b8b8" stroke-width="2.2" fill="none"/></svg>
<svg class="a" style="left:661px;top:295px;" width="22" height="21" viewBox="0 0 22 21"><circle cx="11" cy="10.5" r="9.3" fill="none" stroke="#3a6aa0" stroke-width="2.2"/><path d="M6 10.5 H15 M11.5 6.5 L15.5 10.5 L11.5 14.5" stroke="#3a6aa0" stroke-width="2.5" fill="none"/></svg>
<svg class="a" style="left:692px;top:303px;" width="8" height="5" viewBox="0 0 8 5"><path d="M0.8 0.8 H7 L3.9 4.4 Z" fill="none" stroke="#222" stroke-width="1.2"/></svg>
<svg class="a" style="left:710px;top:296px;" width="18" height="18" viewBox="0 0 18 18"><rect x="0" y="0" width="18" height="18" fill="#5cb85c"/><rect x="3" y="3" width="12" height="12" fill="#90e890"/></svg>
<svg class="a" style="left:746px;top:299px;" width="12" height="14" viewBox="0 0 12 14"><path d="M6 14 V3 M1.5 7 L6 2 L10.5 7" stroke="#8a9298" stroke-width="2.6" fill="none"/></svg>
<svg class="a" style="left:778px;top:297px;" width="12" height="15" viewBox="0 0 12 15"><path d="M6 0 V12 M1.5 8 L6 13 L10.5 8" stroke="#333" stroke-width="2.6" fill="none"/></svg>
<div class="t" style="left:1103px;top:291.30px;font-size:15px;line-height:15px;color:#222;font-weight:normal;">Editing:</div>
<div class="a" style="left:1159px;top:287px;width:185px;height:24px;background:#e3e7ec;"></div>
<div class="a" style="left:1330px;top:288px;width:14px;height:22px;background:#eceff2;"></div>
<svg class="a" style="left:1333px;top:296px;" width="8" height="6" viewBox="0 0 8 6"><path d="M0.8 0.8 H7 L3.9 4.6 Z" fill="none" stroke="#222" stroke-width="1.2"/></svg>
<div class="t" style="left:1161px;top:291.73px;font-size:14.5px;line-height:14.5px;color:#222;font-weight:normal;letter-spacing:-0.45px;">TreeJoin</div>
<div class="a" style="left:609px;top:353px;width:250px;height:494px;background:#f8fafa;box-sizing:border-box;border:1px solid #d4d8dc;border-left:none;"></div>
<div class="a" style="left:610px;top:354px;width:248px;height:44px;background:#edf3f5;"></div>
<svg class="a" style="left:622px;top:366px;" width="20" height="19" viewBox="0 0 20 19"><rect x="3" y="3" width="16" height="16" fill="#c4c8ca"/><path d="M4 0 V7 M0.5 3.5 H7.5" stroke="#c4c8ca" stroke-width="2.2"/><path d="M11 7 V15 M7.5 11.5 L11 15 L14.5 11.5" stroke="#f4f6f6" stroke-width="2" fill="none"/></svg>
<svg class="a" style="left:656px;top:366px;" width="18" height="19" viewBox="0 0 18 19"><path d="M4 0 V7 M0.5 3.5 H7.5" stroke="#c4c8ca" stroke-width="2.2"/><rect x="10" y="4" width="6" height="5" fill="#c4c8ca"/><rect x="2" y="11" width="6" height="6" fill="#c4c8ca"/><rect x="10" y="11" width="6" height="6" fill="#c4c8ca"/></svg>
<div class="a" style="left:684px;top:364px;width:1px;height:24px;background:#d8dcde;"></div>
<svg class="a" style="left:697px;top:367px;" width="20" height="18" viewBox="0 0 20 18"><rect x="1" y="1" width="15" height="14" fill="#e4e6e8" stroke="#c4c8ca" stroke-width="2"/><circle cx="15" cy="14" r="3.8" fill="#f4f6f6" stroke="#c4c8ca" stroke-width="1.4"/><path d="M13 14 H17" stroke="#c4c8ca"/></svg>
<svg class="a" style="left:619px;top:404px;" width="12" height="12" viewBox="0 0 12 12"><rect x="0.5" y="0.5" width="10" height="10" fill="#f4f4f4" stroke="#777"/><path d="M2.5 5.5 H8.5" stroke="#1a3a6a" stroke-width="1.2"/></svg>
<div class="a" style="left:631px;top:409px;width:8px;height:1px;border-top:1px dotted #666;"></div>
<svg class="a" style="left:639px;top:401px;" width="17" height="17" viewBox="0 0 17 17"><rect x="0" y="0" width="17" height="17" fill="#52b04a"/><rect x="2.5" y="2.5" width="12" height="12" fill="#98e890"/></svg>
<div class="t" style="left:663px;top:400.30px;font-size:15px;line-height:15px;color:#16264a;font-weight:bold;">TreeJoin</div>
<div class="a" style="left:648px;top:418px;width:1px;height:211px;border-left:1px dotted #555;"></div>
<div class="a" style="left:649px;top:428px;width:12px;height:1px;border-top:1px dotted #555;"></div>
<svg class="a" style="left:661px;top:422px;" width="21" height="13" viewBox="0 0 21 13"><path d="M0 6.5 L6 0.5 H21 V12.5 H6 Z" fill="#f2c020"/><path d="M6 0.5 H21 V5 H2 Z" fill="#f8d868"/></svg>
<div class="t" style="left:686px;top:420.23px;font-size:14.5px;line-height:14.5px;color:#222;font-weight:normal;">Address <span style="color:#999">(String)</span></div>
<div class="a" style="left:649px;top:448px;width:12px;height:1px;border-top:1px dotted #555;"></div>
<svg class="a" style="left:661px;top:442px;" width="21" height="13" viewBox="0 0 21 13"><path d="M0 6.5 L6 0.5 H21 V12.5 H6 Z" fill="#f2c020"/><path d="M6 0.5 H21 V5 H2 Z" fill="#f8d868"/></svg>
<div class="t" style="left:686px;top:440.23px;font-size:14.5px;line-height:14.5px;color:#222;font-weight:normal;">City <span style="color:#999">(String)</span></div>
<div class="a" style="left:649px;top:468px;width:12px;height:1px;border-top:1px dotted #555;"></div>
<svg class="a" style="left:661px;top:462px;" width="21" height="13" viewBox="0 0 21 13"><path d="M0 6.5 L6 0.5 H21 V12.5 H6 Z" fill="#f2c020"/><path d="M6 0.5 H21 V5 H2 Z" fill="#f8d868"/></svg>
<div class="t" style="left:686px;top:460.23px;font-size:14.5px;line-height:14.5px;color:#222;font-weight:normal;">CompanyName <span style="color:#999">(String)</span></div>
<div class="a" style="left:649px;top:488px;width:12px;height:1px;border-top:1px dotted #555;"></div>
<svg class="a" style="left:661px;top:482px;" width="21" height="13" viewBox="0 0 21 13"><path d="M0 6.5 L6 0.5 H21 V12.5 H6 Z" fill="#f2c020"/><path d="M6 0.5 H21 V5 H2 Z" fill="#f8d868"/></svg>
<div class="t" style="left:686px;top:480.23px;font-size:14.5px;line-height:14.5px;color:#222;font-weight:normal;">ContactName <span style="color:#999">(String)</span></div>
<div class="a" style="left:649px;top:508px;width:12px;height:1px;border-top:1px dotted #555;"></div>
<svg class="a" style="left:661px;top:502px;" width="21" height="13" viewBox="0 0 21 13"><path d="M0 6.5 L6 0.5 H21 V12.5 H6 Z" fill="#f2c020"/><path d="M6 0.5 H21 V5 H2 Z" fill="#f8d868"/></svg>
<div class="t" style="left:686px;top:500.23px;font-size:14.5px;line-height:14.5px;color:#222;font-weight:normal;">ContactTitle <span style="color:#999">(String)</span></div>
<div class="a" style="left:649px;top:528px;width:12px;height:1px;border-top:1px dotted #555;"></div>
<svg class="a" style="left:661px;top:522px;" width="21" height="13" viewBox="0 0 21 13"><path d="M0 6.5 L6 0.5 H21 V12.5 H6 Z" fill="#f2c020"/><path d="M6 0.5 H21 V5 H2 Z" fill="#f8d868"/></svg>
<div class="t" style="left:686px;top:520.23px;font-size:14.5px;line-height:14.5px;color:#222;font-weight:normal;">Country <span style="color:#999">(String)</span></div>
<div class="a" style="left:649px;top:548px;width:12px;height:1px;border-top:1px dotted #555;"></div>
<svg class="a" style="left:661px;top:542px;" width="21" height="13" viewBox="0 0 21 13"><path d="M0 6.5 L6 0.5 H21 V12.5 H6 Z" fill="#f2c020"/><path d="M6 0.5 H21 V5 H2 Z" fill="#f8d868"/></svg>
<div class="t" style="left:686px;top:540.23px;font-size:14.5px;line-height:14.5px;color:#222;font-weight:normal;">CustomerID <span style="color:#999">(String)</span></div>
<div class="a" style="left:649px;top:568px;width:12px;height:1px;border-top:1px dotted #555;"></div>
<svg class="a" style="left:661px;top:562px;" width="21" height="13" viewBox="0 0 21 13"><path d="M0 6.5 L6 0.5 H21 V12.5 H6 Z" fill="#f2c020"/><path d="M6 0.5 H21 V5 H2 Z" fill="#f8d868"/></svg>
<div class="t" style="left:686px;top:560.23px;font-size:14.5px;line-height:14.5px;color:#222;font-weight:normal;">Fax <span style="color:#999">(String)</span></div>
<div class="a" style="left:649px;top:588px;width:12px;height:1px;border-top:1px dotted #555;"></div>
<svg class="a" style="left:661px;top:582px;" width="21" height="13" viewBox="0 0 21 13"><path d="M0 6.5 L6 0.5 H21 V12.5 H6 Z" fill="#f2c020"/><path d="M6 0.5 H21 V5 H2 Z" fill="#f8d868"/></svg>
<div class="t" style="left:686px;top:580.23px;font-size:14.5px;line-height:14.5px;color:#222;font-weight:normal;">Phone <span style="color:#999">(String)</span></div>
<div class="a" style="left:649px;top:608px;width:12px;height:1px;border-top:1px dotted #555;"></div>
<svg class="a" style="left:661px;top:602px;" width="21" height="13" viewBox="0 0 21 13"><path d="M0 6.5 L6 0.5 H21 V12.5 H6 Z" fill="#f2c020"/><path d="M6 0.5 H21 V5 H2 Z" fill="#f8d868"/></svg>
<div class="t" style="left:686px;top:600.23px;font-size:14.5px;line-height:14.5px;color:#222;font-weight:normal;">PostalCode <span style="color:#999">(String)</span></div>
<div class="a" style="left:649px;top:628px;width:12px;height:1px;border-top:1px dotted #555;"></div>
<svg class="a" style="left:661px;top:622px;" width="21" height="13" viewBox="0 0 21 13"><path d="M0 6.5 L6 0.5 H21 V12.5 H6 Z" fill="#f2c020"/><path d="M6 0.5 H21 V5 H2 Z" fill="#f8d868"/></svg>
<div class="t" style="left:686px;top:620.23px;font-size:14.5px;line-height:14.5px;color:#222;font-weight:normal;">Region <span style="color:#999">(String)</span></div>
<div class="a" style="left:863px;top:340px;width:493px;height:510px;box-sizing:border-box;border:1px solid #d8dde0;"></div>
<div class="a" style="left:872px;top:335px;width:200px;height:12px;background:#f8fafa;"></div>
<div class="t" style="left:876px;top:335.32px;font-size:13.8px;line-height:13.8px;color:#333;font-weight:normal;">Editing elements for &lt;TreeJoin&gt;</div>
<div class="a" style="left:873px;top:353px;width:471px;height:355px;background:#f8fafa;box-sizing:border-box;border:1px solid #dcdfe2;"></div>
<div class="a" style="left:873px;top:353px;width:1px;height:487px;background:#d0d4d8;"></div>
<div class="a" style="left:919px;top:354px;width:1px;height:23px;background:#dfe3e6;"></div>
<div class="a" style="left:1018px;top:354px;width:1px;height:23px;background:#dfe3e6;"></div>
<div class="a" style="left:1118px;top:354px;width:1px;height:23px;background:#dfe3e6;"></div>
<div class="a" style="left:1223px;top:354px;width:1px;height:23px;background:#dfe3e6;"></div>
<div class="t" style="left:929px;top:358.57px;font-size:13.5px;line-height:13.5px;color:#222;font-weight:normal;">Name</div>
<div class="t" style="left:1028px;top:358.57px;font-size:13.5px;line-height:13.5px;color:#222;font-weight:normal;">Data Type</div>
<div class="t" style="left:1128px;top:359.00px;font-size:13px;line-height:13px;color:#222;font-weight:normal;">Description</div>
<div class="t" style="left:1234px;top:358.57px;font-size:13.5px;line-height:13.5px;color:#222;font-weight:normal;">Default Value</div>
<div class="a" style="left:874px;top:377px;width:45px;height:28px;background:#c3d9ea;"></div>
<div class="a" style="left:920px;top:377px;width:98px;height:28px;background:#0b78cb;"></div>
<div class="a" style="left:1119px;top:377px;width:104px;height:28px;background:#0b78cb;"></div>
<div class="a" style="left:1224px;top:377px;width:119px;height:28px;background:#0b78cb;"></div>
<div class="a" style="left:1223px;top:377px;width:1px;height:28px;background:#c8dcee;"></div>
<div class="a" style="left:874px;top:404px;width:469px;height:1px;background:#dfe3e6;"></div>
<div class="a" style="left:1019px;top:377px;width:99px;height:27px;background:#dedcde;box-sizing:border-box;border:1px solid #b0b0b0;"></div>
<div class="a" style="left:1097px;top:377px;width:1px;height:27px;background:#a8a8a8;"></div>
<svg class="a" style="left:1101px;top:387px;" width="12" height="7" viewBox="0 0 12 7"><path d="M1 1 L6 6 L11 1" stroke="#555" stroke-width="1.2" fill="none"/></svg>
<div class="t" style="left:1023px;top:386.16px;font-size:12.8px;line-height:12.8px;color:#222;font-weight:normal;">String</div>
<svg class="a" style="left:880px;top:385px;" width="8" height="12" viewBox="0 0 8 12"><path d="M0.5 0.5 L7.5 6 L0.5 11.5 Z" fill="#333"/></svg>
<div class="t" style="left:894px;top:385.57px;font-size:13.5px;line-height:13.5px;color:#222;font-weight:normal;">01</div>
<div class="t" style="left:924px;top:386.08px;font-size:12.9px;line-height:12.9px;color:#fff;font-weight:normal;">CustomerID</div>
<div class="a" style="left:874px;top:405px;width:45px;height:27px;background:#f8fafa;"></div>
<div class="a" style="left:920px;top:405px;width:98px;height:27px;background:#ecf2f5;"></div>
<div class="a" style="left:1119px;top:405px;width:104px;height:27px;background:#ecf2f5;"></div>
<div class="a" style="left:1224px;top:405px;width:119px;height:27px;background:#ecf2f5;"></div>
<div class="a" style="left:919px;top:405px;width:1px;height:27px;background:#dfe3e6;"></div>
<div class="a" style="left:1223px;top:405px;width:1px;height:27px;background:#dfe3e6;"></div>
<div class="a" style="left:874px;top:431px;width:469px;height:1px;background:#dfe3e6;"></div>
<div class="a" style="left:1019px;top:405px;width:99px;height:26px;background:#dedcde;box-sizing:border-box;border:1px solid #b0b0b0;"></div>
<div class="a" style="left:1097px;top:405px;width:1px;height:26px;background:#a8a8a8;"></div>
<svg class="a" style="left:1101px;top:415px;" width="12" height="7" viewBox="0 0 12 7"><path d="M1 1 L6 6 L11 1" stroke="#555" stroke-width="1.2" fill="none"/></svg>
<div class="t" style="left:1023px;top:414.16px;font-size:12.8px;line-height:12.8px;color:#222;font-weight:normal;">String</div>
<div class="t" style="left:894px;top:413.57px;font-size:13.5px;line-height:13.5px;color:#222;font-weight:normal;">02</div>
<div class="t" style="left:924px;top:414.08px;font-size:12.9px;line-height:12.9px;color:#404040;font-weight:normal;">CompanyName</div>
<div class="a" style="left:874px;top:432px;width:45px;height:28px;background:#f8fafa;"></div>
<div class="a" style="left:920px;top:432px;width:98px;height:28px;background:#f8fafa;"></div>
<div class="a" style="left:1119px;top:432px;width:104px;height:28px;background:#f8fafa;"></div>
<div class="a" style="left:1224px;top:432px;width:119px;height:28px;background:#f8fafa;"></div>
<div class="a" style="left:919px;top:432px;width:1px;height:28px;background:#dfe3e6;"></div>
<div class="a" style="left:1223px;top:432px;width:1px;height:28px;background:#dfe3e6;"></div>
<div class="a" style="left:874px;top:459px;width:469px;height:1px;background:#dfe3e6;"></div>
<div class="a" style="left:1019px;top:432px;width:99px;height:27px;background:#dedcde;box-sizing:border-box;border:1px solid #b0b0b0;"></div>
<div class="a" style="left:1097px;top:432px;width:1px;height:27px;background:#a8a8a8;"></div>
<svg class="a" style="left:1101px;top:442px;" width="12" height="7" viewBox="0 0 12 7"><path d="M1 1 L6 6 L11 1" stroke="#555" stroke-width="1.2" fill="none"/></svg>
<div class="t" style="left:1023px;top:441.16px;font-size:12.8px;line-height:12.8px;color:#222;font-weight:normal;">String</div>
<div class="t" style="left:894px;top:440.57px;font-size:13.5px;line-height:13.5px;color:#222;font-weight:normal;">03</div>
<div class="t" style="left:924px;top:441.08px;font-size:12.9px;line-height:12.9px;color:#404040;font-weight:normal;">ContactName</div>
<div class="a" style="left:874px;top:460px;width:45px;height:27px;background:#f8fafa;"></div>
<div class="a" style="left:920px;top:460px;width:98px;height:27px;background:#ecf2f5;"></div>
<div class="a" style="left:1119px;top:460px;width:104px;height:27px;background:#ecf2f5;"></div>
<div class="a" style="left:1224px;top:460px;width:119px;height:27px;background:#ecf2f5;"></div>
<div class="a" style="left:919px;top:460px;width:1px;height:27px;background:#dfe3e6;"></div>
<div class="a" style="left:1223px;top:460px;width:1px;height:27px;background:#dfe3e6;"></div>
<div class="a" style="left:874px;top:486px;width:469px;height:1px;background:#dfe3e6;"></div>
<div class="a" style="left:1019px;top:460px;width:99px;height:26px;background:#dedcde;box-sizing:border-box;border:1px solid #b0b0b0;"></div>
<div class="a" style="left:1097px;top:460px;width:1px;height:26px;background:#a8a8a8;"></div>
<svg class="a" style="left:1101px;top:470px;" width="12" height="7" viewBox="0 0 12 7"><path d="M1 1 L6 6 L11 1" stroke="#555" stroke-width="1.2" fill="none"/></svg>
<div class="t" style="left:1023px;top:469.16px;font-size:12.8px;line-height:12.8px;color:#222;font-weight:normal;">String</div>
<div class="t" style="left:894px;top:468.57px;font-size:13.5px;line-height:13.5px;color:#222;font-weight:normal;">04</div>
<div class="t" style="left:924px;top:469.08px;font-size:12.9px;line-height:12.9px;color:#404040;font-weight:normal;">ContactTitle</div>
<div class="a" style="left:874px;top:487px;width:45px;height:28px;background:#f8fafa;"></div>
<div class="a" style="left:920px;top:487px;width:98px;height:28px;background:#f8fafa;"></div>
<div class="a" style="left:1119px;top:487px;width:104px;height:28px;background:#f8fafa;"></div>
<div class="a" style="left:1224px;top:487px;width:119px;height:28px;background:#f8fafa;"></div>
<div class="a" style="left:919px;top:487px;width:1px;height:28px;background:#dfe3e6;"></div>
<div class="a" style="left:1223px;top:487px;width:1px;height:28px;background:#dfe3e6;"></div>
<div class="a" style="left:874px;top:514px;width:469px;height:1px;background:#dfe3e6;"></div>
<div class="a" style="left:1019px;top:487px;width:99px;height:27px;background:#dedcde;box-sizing:border-box;border:1px solid #b0b0b0;"></div>
<div class="a" style="left:1097px;top:487px;width:1px;height:27px;background:#a8a8a8;"></div>
<svg class="a" style="left:1101px;top:497px;" width="12" height="7" viewBox="0 0 12 7"><path d="M1 1 L6 6 L11 1" stroke="#555" stroke-width="1.2" fill="none"/></svg>
<div class="t" style="left:1023px;top:496.16px;font-size:12.8px;line-height:12.8px;color:#222;font-weight:normal;">String</div>
<div class="t" style="left:894px;top:495.57px;font-size:13.5px;line-height:13.5px;color:#222;font-weight:normal;">05</div>
<div class="t" style="left:924px;top:496.08px;font-size:12.9px;line-height:12.9px;color:#404040;font-weight:normal;">Address</div>
<div class="a" style="left:874px;top:515px;width:45px;height:27px;background:#f8fafa;"></div>
<div class="a" style="left:920px;top:515px;width:98px;height:27px;background:#ecf2f5;"></div>
<div class="a" style="left:1119px;top:515px;width:104px;height:27px;background:#ecf2f5;"></div>
<div class="a" style="left:1224px;top:515px;width:119px;height:27px;background:#ecf2f5;"></div>
<div class="a" style="left:919px;top:515px;width:1px;height:27px;background:#dfe3e6;"></div>
<div class="a" style="left:1223px;top:515px;width:1px;height:27px;background:#dfe3e6;"></div>
<div class="a" style="left:874px;top:541px;width:469px;height:1px;background:#dfe3e6;"></div>
<div class="a" style="left:1019px;top:515px;width:99px;height:26px;background:#dedcde;box-sizing:border-box;border:1px solid #b0b0b0;"></div>
<div class="a" style="left:1097px;top:515px;width:1px;height:26px;background:#a8a8a8;"></div>
<svg class="a" style="left:1101px;top:525px;" width="12" height="7" viewBox="0 0 12 7"><path d="M1 1 L6 6 L11 1" stroke="#555" stroke-width="1.2" fill="none"/></svg>
<div class="t" style="left:1023px;top:524.16px;font-size:12.8px;line-height:12.8px;color:#222;font-weight:normal;">String</div>
<div class="t" style="left:894px;top:523.57px;font-size:13.5px;line-height:13.5px;color:#222;font-weight:normal;">06</div>
<div class="t" style="left:924px;top:524.08px;font-size:12.9px;line-height:12.9px;color:#404040;font-weight:normal;">City</div>
<div class="a" style="left:874px;top:542px;width:45px;height:28px;background:#f8fafa;"></div>
<div class="a" style="left:920px;top:542px;width:98px;height:28px;background:#f8fafa;"></div>
<div class="a" style="left:1119px;top:542px;width:104px;height:28px;background:#f8fafa;"></div>
<div class="a" style="left:1224px;top:542px;width:119px;height:28px;background:#f8fafa;"></div>
<div class="a" style="left:919px;top:542px;width:1px;height:28px;background:#dfe3e6;"></div>
<div class="a" style="left:1223px;top:542px;width:1px;height:28px;background:#dfe3e6;"></div>
<div class="a" style="left:874px;top:569px;width:469px;height:1px;background:#dfe3e6;"></div>
<div class="a" style="left:1019px;top:542px;width:99px;height:27px;background:#dedcde;box-sizing:border-box;border:1px solid #b0b0b0;"></div>
<div class="a" style="left:1097px;top:542px;width:1px;height:27px;background:#a8a8a8;"></div>
<svg class="a" style="left:1101px;top:552px;" width="12" height="7" viewBox="0 0 12 7"><path d="M1 1 L6 6 L11 1" stroke="#555" stroke-width="1.2" fill="none"/></svg>
<div class="t" style="left:1023px;top:551.16px;font-size:12.8px;line-height:12.8px;color:#222;font-weight:normal;">String</div>
<div class="t" style="left:894px;top:550.57px;font-size:13.5px;line-height:13.5px;color:#222;font-weight:normal;">07</div>
<div class="t" style="left:924px;top:551.08px;font-size:12.9px;line-height:12.9px;color:#404040;font-weight:normal;">Region</div>
<div class="a" style="left:874px;top:570px;width:45px;height:27px;background:#f8fafa;"></div>
<div class="a" style="left:920px;top:570px;width:98px;height:27px;background:#ecf2f5;"></div>
<div class="a" style="left:1119px;top:570px;width:104px;height:27px;background:#ecf2f5;"></div>
<div class="a" style="left:1224px;top:570px;width:119px;height:27px;background:#ecf2f5;"></div>
<div class="a" style="left:919px;top:570px;width:1px;height:27px;background:#dfe3e6;"></div>
<div class="a" style="left:1223px;top:570px;width:1px;height:27px;background:#dfe3e6;"></div>
<div class="a" style="left:874px;top:596px;width:469px;height:1px;background:#dfe3e6;"></div>
<div class="a" style="left:1019px;top:570px;width:99px;height:26px;background:#dedcde;box-sizing:border-box;border:1px solid #b0b0b0;"></div>
<div class="a" style="left:1097px;top:570px;width:1px;height:26px;background:#a8a8a8;"></div>
<svg class="a" style="left:1101px;top:580px;" width="12" height="7" viewBox="0 0 12 7"><path d="M1 1 L6 6 L11 1" stroke="#555" stroke-width="1.2" fill="none"/></svg>
<div class="t" style="left:1023px;top:579.16px;font-size:12.8px;line-height:12.8px;color:#222;font-weight:normal;">String</div>
<div class="t" style="left:894px;top:578.57px;font-size:13.5px;line-height:13.5px;color:#222;font-weight:normal;">08</div>
<div class="t" style="left:924px;top:579.08px;font-size:12.9px;line-height:12.9px;color:#404040;font-weight:normal;">PostalCode</div>
<div class="a" style="left:874px;top:597px;width:45px;height:28px;background:#f8fafa;"></div>
<div class="a" style="left:920px;top:597px;width:98px;height:28px;background:#f8fafa;"></div>
<div class="a" style="left:1119px;top:597px;width:104px;height:28px;background:#f8fafa;"></div>
<div class="a" style="left:1224px;top:597px;width:119px;height:28px;background:#f8fafa;"></div>
<div class="a" style="left:919px;top:597px;width:1px;height:28px;background:#dfe3e6;"></div>
<div class="a" style="left:1223px;top:597px;width:1px;height:28px;background:#dfe3e6;"></div>
<div class="a" style="left:874px;top:624px;width:469px;height:1px;background:#dfe3e6;"></div>
<div class="a" style="left:1019px;top:597px;width:99px;height:27px;background:#dedcde;box-sizing:border-box;border:1px solid #b0b0b0;"></div>
<div class="a" style="left:1097px;top:597px;width:1px;height:27px;background:#a8a8a8;"></div>
<svg class="a" style="left:1101px;top:607px;" width="12" height="7" viewBox="0 0 12 7"><path d="M1 1 L6 6 L11 1" stroke="#555" stroke-width="1.2" fill="none"/></svg>
<div class="t" style="left:1023px;top:606.16px;font-size:12.8px;line-height:12.8px;color:#222;font-weight:normal;">String</div>
<div class="t" style="left:894px;top:605.57px;font-size:13.5px;line-height:13.5px;color:#222;font-weight:normal;">09</div>
<div class="t" style="left:924px;top:606.08px;font-size:12.9px;line-height:12.9px;color:#404040;font-weight:normal;">Country</div>
<div class="a" style="left:874px;top:625px;width:45px;height:28px;background:#f8fafa;"></div>
<div class="a" style="left:920px;top:625px;width:98px;height:28px;background:#ecf2f5;"></div>
<div class="a" style="left:1119px;top:625px;width:104px;height:28px;background:#ecf2f5;"></div>
<div class="a" style="left:1224px;top:625px;width:119px;height:28px;background:#ecf2f5;"></div>
<div class="a" style="left:919px;top:625px;width:1px;height:28px;background:#dfe3e6;"></div>
<div class="a" style="left:1223px;top:625px;width:1px;height:28px;background:#dfe3e6;"></div>
<div class="a" style="left:874px;top:652px;width:469px;height:1px;background:#dfe3e6;"></div>
<div class="a" style="left:1019px;top:625px;width:99px;height:27px;background:#dedcde;box-sizing:border-box;border:1px solid #b0b0b0;"></div>
<div class="a" style="left:1097px;top:625px;width:1px;height:27px;background:#a8a8a8;"></div>
<svg class="a" style="left:1101px;top:635px;" width="12" height="7" viewBox="0 0 12 7"><path d="M1 1 L6 6 L11 1" stroke="#555" stroke-width="1.2" fill="none"/></svg>
<div class="t" style="left:1023px;top:634.16px;font-size:12.8px;line-height:12.8px;color:#222;font-weight:normal;">String</div>
<div class="t" style="left:894px;top:633.57px;font-size:13.5px;line-height:13.5px;color:#222;font-weight:normal;">10</div>
<div class="t" style="left:924px;top:634.08px;font-size:12.9px;line-height:12.9px;color:#404040;font-weight:normal;">Phone</div>
<div class="a" style="left:874px;top:653px;width:45px;height:27px;background:#f8fafa;"></div>
<div class="a" style="left:920px;top:653px;width:98px;height:27px;background:#f8fafa;"></div>
<div class="a" style="left:1119px;top:653px;width:104px;height:27px;background:#f8fafa;"></div>
<div class="a" style="left:1224px;top:653px;width:119px;height:27px;background:#f8fafa;"></div>
<div class="a" style="left:919px;top:653px;width:1px;height:27px;background:#dfe3e6;"></div>
<div class="a" style="left:1223px;top:653px;width:1px;height:27px;background:#dfe3e6;"></div>
<div class="a" style="left:874px;top:679px;width:469px;height:1px;background:#dfe3e6;"></div>
<div class="a" style="left:1019px;top:653px;width:99px;height:26px;background:#dedcde;box-sizing:border-box;border:1px solid #b0b0b0;"></div>
<div class="a" style="left:1097px;top:653px;width:1px;height:26px;background:#a8a8a8;"></div>
<svg class="a" style="left:1101px;top:663px;" width="12" height="7" viewBox="0 0 12 7"><path d="M1 1 L6 6 L11 1" stroke="#555" stroke-width="1.2" fill="none"/></svg>
<div class="t" style="left:1023px;top:662.16px;font-size:12.8px;line-height:12.8px;color:#222;font-weight:normal;">String</div>
<div class="t" style="left:894px;top:661.57px;font-size:13.5px;line-height:13.5px;color:#222;font-weight:normal;">11</div>
<div class="t" style="left:924px;top:662.08px;font-size:12.9px;line-height:12.9px;color:#404040;font-weight:normal;">Fax</div>
<div class="a" style="left:874px;top:680px;width:45px;height:28px;background:#f8fafa;"></div>
<div class="a" style="left:920px;top:680px;width:98px;height:28px;background:#ecf2f5;"></div>
<div class="a" style="left:1119px;top:680px;width:104px;height:28px;background:#ecf2f5;"></div>
<div class="a" style="left:1224px;top:680px;width:119px;height:28px;background:#ecf2f5;"></div>
<div class="a" style="left:919px;top:680px;width:1px;height:28px;background:#dfe3e6;"></div>
<div class="a" style="left:1223px;top:680px;width:1px;height:28px;background:#dfe3e6;"></div>
<div class="a" style="left:874px;top:707px;width:469px;height:1px;background:#dfe3e6;"></div>
<div class="a" style="left:1019px;top:680px;width:99px;height:27px;background:#dedcde;box-sizing:border-box;border:1px solid #b0b0b0;"></div>
<div class="a" style="left:1097px;top:680px;width:1px;height:27px;background:#a8a8a8;"></div>
<svg class="a" style="left:1101px;top:690px;" width="12" height="7" viewBox="0 0 12 7"><path d="M1 1 L6 6 L11 1" stroke="#555" stroke-width="1.2" fill="none"/></svg>
<svg class="a" style="left:882px;top:690px;" width="7" height="7" viewBox="0 0 7 7"><circle cx="3.5" cy="3.5" r="3" fill="#444"/></svg>
<div class="t" style="left:894px;top:688.57px;font-size:13.5px;line-height:13.5px;color:#222;font-weight:normal;">12</div>
<div class="a" style="left:1037px;top:860px;width:81px;height:28px;background:#edf2f5;box-sizing:border-box;border:1px solid #d4dade;"></div>
<div class="t" style="left:1037px;top:866px;width:81px;text-align:center;font-size:13.6px;line-height:17px;color:#555">Prev</div>
<div class="a" style="left:1118px;top:860px;width:81px;height:28px;background:#edf2f5;box-sizing:border-box;border:1px solid #d4dade;"></div>
<div class="t" style="left:1118px;top:866px;width:81px;text-align:center;font-size:13.6px;line-height:17px;color:#222">Next</div>
<div class="a" style="left:1199px;top:860px;width:81px;height:28px;background:#edf2f5;box-sizing:border-box;border:1px solid #d4dade;"></div>
<div class="t" style="left:1199px;top:866px;width:81px;text-align:center;font-size:13.6px;line-height:17px;color:#222">OK</div>
<div class="a" style="left:1280px;top:860px;width:81px;height:28px;background:#edf2f5;box-sizing:border-box;border:1px solid #d4dade;"></div>
<div class="t" style="left:1280px;top:866px;width:81px;text-align:center;font-size:13.6px;line-height:17px;color:#222">Cancel</div>
<svg class="a" style="left:1158px;top:771px;" width="14" height="21" viewBox="0 0 14 21"><path d="M1 1 V17 L5 13 L8 20 L10.5 19 L7.5 12 L13 12 Z" fill="#fff" stroke="#111" stroke-width="1.1" stroke-linejoin="round"/></svg>
</body></html>
